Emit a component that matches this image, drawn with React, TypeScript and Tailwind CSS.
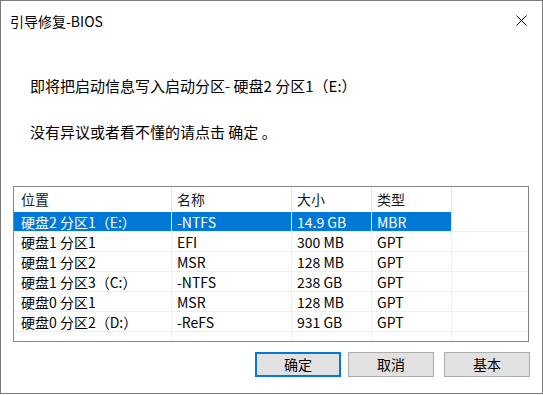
import React from 'react';

const rows = [
  ['硬盘2 分区1（E:）', '-NTFS', '14.9 GB', 'MBR'],
  ['硬盘1 分区1', 'EFI', '300 MB', 'GPT'],
  ['硬盘1 分区2', 'MSR', '128 MB', 'GPT'],
  ['硬盘1 分区3（C:）', '-NTFS', '238 GB', 'GPT'],
  ['硬盘0 分区1', 'MSR', '128 MB', 'GPT'],
  ['硬盘0 分区2（D:）', '-ReFS', '931 GB', 'GPT'],
];

const headers = ['位置', '名称', '大小', '类型', ''];

export default function App() {
  return (
    <div
      className="w-[543px] h-[395px] bg-white"
      style={{ fontFamily: '"Noto Sans CJK SC", "Liberation Sans", sans-serif' }}
    >
      <div className="w-[543px] h-[394px] border border-[#7a7a7a] flex flex-col text-black">
        {/* Title bar */}
        <div className="h-[39px] flex items-center justify-between pl-[9px] pr-[15px]">
          <span className="text-[14px] leading-[20px]">引导修复-BIOS</span>
          <svg width="11" height="11" viewBox="0 0 11 11">
            <path d="M0.5 0.5 L10.5 10.5 M10.5 0.5 L0.5 10.5" stroke="#111" strokeWidth="1" />
          </svg>
        </div>

        {/* Messages */}
        <p className="mt-[36px] ml-[29px] text-[15px] leading-[20px]">即将把启动信息写入启动分区- 硬盘2 分区1（E:）</p>
        <p className="mt-[26px] ml-[29px] text-[15px] leading-[20px]">没有异议或者看不懂的请点击 确定 。</p>

        {/* List */}
        <div className="mt-[44px] ml-[12px] w-[516px] h-[156px] border border-[#828790] overflow-hidden">
          <div className="grid grid-cols-[158px_120px_80px_80px_1fr] text-[14px]">
            {headers.map((h, i) => (
              <div
                key={i}
                className={`h-[25px] flex items-center text-[#1a1a1a] ${i === 0 ? 'pl-[7px]' : 'pl-[5px]'} ${i < 4 ? 'border-r border-[#e5e5e5]' : ''}`}
              >
                {h}
              </div>
            ))}
            {rows.map((r, ri) =>
              [...r, ''].map((c, ci) => {
                const sel = ri === 0 && ci < 4;
                return (
                  <div
                    key={`${ri}-${ci}`}
                    className={`h-[20px] flex items-center border-b border-[#f0f0f0] ${ci < 4 ? 'border-r' : ''} ${
                      sel ? 'bg-[#0078d7] text-white border-r-[#d8e8f7]' : 'border-r-[#f0f0f0]'
                    } ${ci === 0 ? 'pl-[7px]' : 'pl-[5px]'} leading-[18px]`}
                  >
                    {c}
                  </div>
                );
              })
            )}
            {[0, 1, 2, 3, 4].map((i) => (
              <div key={`e${i}`} className={`h-[20px] ${i < 4 ? 'border-r border-[#f0f0f0]' : ''}`} />
            ))}
          </div>
        </div>

        {/* Buttons */}
        <div className="mt-[10px] flex justify-end pr-[12px] text-[14px]">
          <button className="w-[86px] h-[25px] bg-[#e1e1e1] border-2 border-[#0078d7] flex items-center justify-center">
            确定
          </button>
          <button className="ml-[7px] w-[86px] h-[25px] bg-[#e1e1e1] border border-[#adadad] flex items-center justify-center">
            取消
          </button>
          <button className="ml-[10px] w-[86px] h-[25px] bg-[#e1e1e1] border border-[#adadad] flex items-center justify-center">
            基本
          </button>
        </div>
      </div>
    </div>
  );
}
